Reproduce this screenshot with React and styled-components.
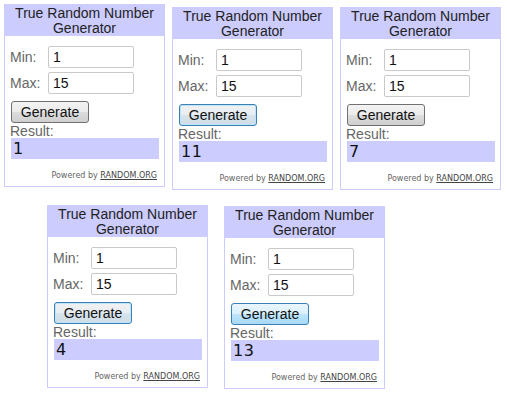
import React from 'react';
import styled, { createGlobalStyle, css } from 'styled-components';

const GlobalStyle = createGlobalStyle`
  body {
    margin: 0;
    background: #fff;
    font-family: "Liberation Sans", Arial, sans-serif;
  }
`;

const Page = styled.div`
  display: flex;
  flex-direction: column;
  width: 507px;
  height: 419px;
  overflow: hidden;
`;

const Row = styled.div`
  display: flex;
  align-items: flex-start;
  gap: ${(p) => p.$gap}px;
  padding: ${(p) => p.$top}px 0 0 ${(p) => p.$left}px;
`;

const Widget = styled.div`
  width: 159px;
  height: 181px;
  margin-top: ${(p) => p.$offset || 0}px;
  border: 1px solid #ccccff;
  background: #fff;
  display: flex;
  flex-direction: column;
`;

const Header = styled.div`
  height: 31px;
  background: #ccccff;
  color: #222;
  font-size: 14px;
  line-height: 15px;
  text-align: center;
  padding-top: 1px;
  box-sizing: border-box;
`;

const Body = styled.div`
  display: flex;
  flex-direction: column;
  padding: 10px 6px 0 5px;
`;

const Field = styled.div`
  display: flex;
  align-items: center;
  height: 22px;
  margin-bottom: 4px;
`;

const Label = styled.span`
  width: 38px;
  font-size: 14px;
  color: #666;
`;

const Input = styled.div`
  width: 80px;
  height: 20px;
  border: 1px solid #c9c9c9;
  border-radius: 2px;
  padding-left: 4px;
  font-size: 14px;
  line-height: 20px;
  color: #111;
  box-sizing: content-box;
`;

const buttonLooks = {
  plain: css`
    border-color: #707070;
    background: linear-gradient(#f3f3f3 0%, #ebebeb 50%, #dddddd 51%, #cfcfcf 100%);
  `,
  focus: css`
    border-color: #3c7fb1;
    box-shadow: inset 0 0 0 1px #bde4f9;
    background: linear-gradient(#f0f0f0 0%, #e8eef2 50%, #d8e4ec 51%, #cfdde8 100%);
  `,
  hover: css`
    border-color: #3c7fb1;
    background: linear-gradient(#eaf6fd 0%, #d9f0fc 50%, #bee6fd 51%, #a7d9f5 100%);
  `,
};

const Button = styled.button`
  width: 78px;
  height: 22px;
  margin-top: 3px;
  margin-left: 1px;
  padding: 0;
  border: 1px solid;
  border-radius: 3px;
  font-family: "Liberation Sans", Arial, sans-serif;
  font-size: 14px;
  color: #111;
  ${(p) => buttonLooks[p.$look]}
`;

const ResultLabel = styled.div`
  font-size: 14px;
  color: #666;
  line-height: 14px;
  margin-top: 1px;
`;

const ResultBox = styled.div`
  width: 148px;
  height: 21px;
  margin-left: 1px;
  background: #ccccff;
  font-family: "DejaVu Sans", Verdana, sans-serif;
  font-size: 16px;
  letter-spacing: 0.5px;
  line-height: 22px;
  padding-left: 2px;
  box-sizing: border-box;
  color: #111;
`;

const Powered = styled.div`
  margin-top: 12px;
  text-align: right;
  font-family: "DejaVu Sans", Verdana, sans-serif;
  font-size: 8px;
  line-height: 10px;
  color: #666;
  padding-right: 1px;

  span {
    color: #444;
    text-decoration: underline;
  }
`;

function Generator({ result, look, offset }) {
  return (
    <Widget $offset={offset}>
      <Header>
        True Random Number
        <br />
        Generator
      </Header>
      <Body>
        <Field>
          <Label>Min:</Label>
          <Input>1</Input>
        </Field>
        <Field>
          <Label>Max:</Label>
          <Input>15</Input>
        </Field>
        <Button $look={look}>Generate</Button>
        <ResultLabel>Result:</ResultLabel>
        <ResultBox>{result}</ResultBox>
        <Powered>
          Powered by <span>RANDOM.ORG</span>
        </Powered>
      </Body>
    </Widget>
  );
}

export default function App() {
  return (
    <Page>
      <GlobalStyle />
      <Row $top={4} $left={4} $gap={7}>
        <Generator result="1" look="plain" />
        <Generator result="11" look="focus" offset={3} />
        <Generator result="7" look="plain" offset={3} />
      </Row>
      <Row $top={15} $left={47} $gap={16}>
        <Generator result="4" look="focus" />
        <Generator result="13" look="hover" offset={1} />
      </Row>
    </Page>
  );
}
